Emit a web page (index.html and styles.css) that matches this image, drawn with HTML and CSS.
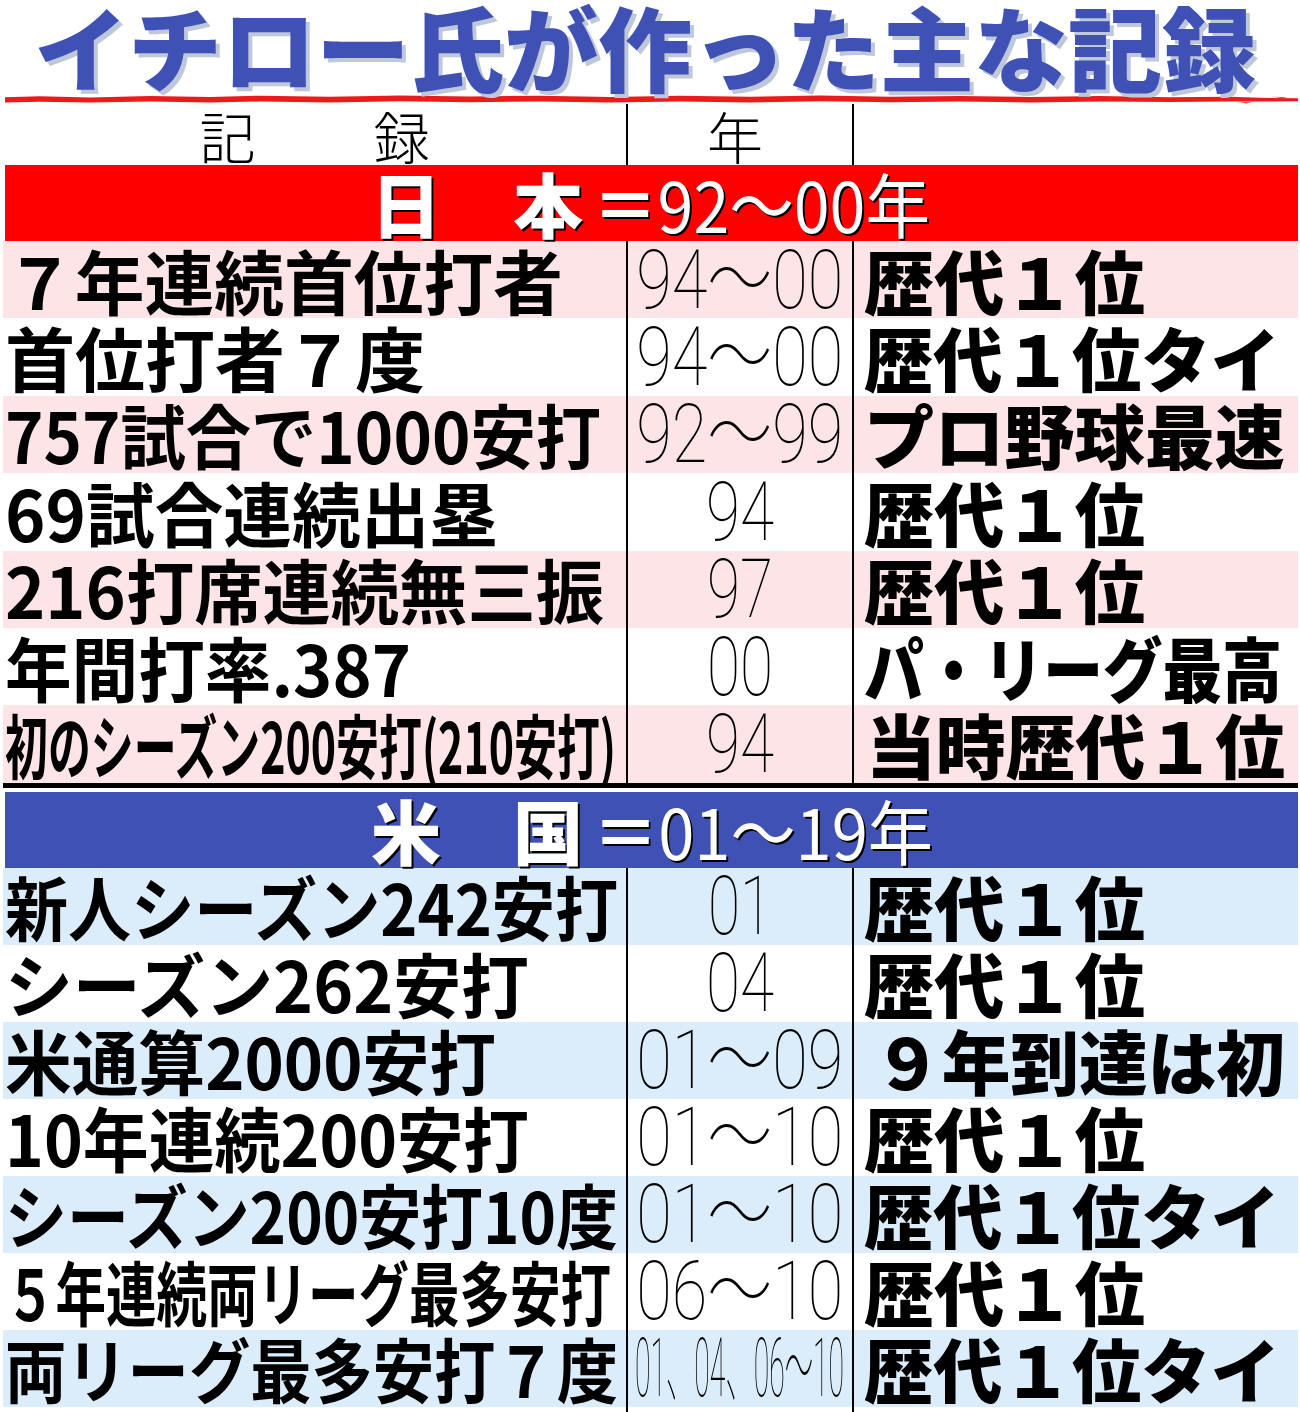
FILE: index.html
```html
<!DOCTYPE html>
<html lang="ja">
<head>
<meta charset="utf-8">
<title>イチロー氏が作った主な記録</title>
<link rel="stylesheet" href="styles.css">
</head>
<body>
<div class="page">
  <h1 class="title"><span class="fit" data-w="1222">イチロー氏が作った主な記録</span></h1>
  <svg class="wave" width="1300" height="9" viewBox="0 0 1300 9" aria-hidden="true">
    <polygon fill="#ec1b1b" points="5,2.2 40,1.2 90,2.4 150,0.9 210,2 260,0.7 330,1.8 400,0.5 470,1.6 540,0.7 610,1.9 680,0.8 750,1.7 820,0.6 890,1.8 960,0.9 1030,2 1100,1 1170,2.2 1230,1.8 1260,2.8 1298,3.2 1298,6.2 1262,6.6 1230,6.4 1170,7.1 1100,6.5 1030,7.4 960,6.4 890,7.3 820,6.3 750,7.4 680,6.5 610,7.5 540,6.4 470,7.3 400,6.2 330,7.4 260,6.5 210,7.6 150,6.6 90,7.6 40,6.7 5,7.4"/>
    <polygon fill="#ec1b1b" points="1240,7 1252,7.5 1246,8.6"/>
    <polygon fill="#ec1b1b" points="1272,1.8 1288,2.2 1282,3"/>
  </svg>
  <div class="row head">
    <div class="c1"><span>記</span><span>録</span></div>
    <div class="c2"><span>年</span></div>
    <div class="c3"></div>
  </div>

  <div class="band red">
    <span class="bk">日</span><span class="bk bk2">本</span><span class="fit num" data-w="337"><b class="eq">＝</b>92〜00年</span>
  </div>

  <div class="sec jp">
    <div class="row"><div class="c1"><span class="fit" data-w="558">７年連続首位打者</span></div><div class="c2"><span class="fit" data-w="207">94〜00</span></div><div class="c3"><span class="fit" data-w="281">歴代１位</span></div></div>
    <div class="row"><div class="c1"><span class="fit" data-w="420">首位打者７度</span></div><div class="c2"><span class="fit" data-w="207">94〜00</span></div><div class="c3"><span class="fit" data-w="416">歴代１位タイ</span></div></div>
    <div class="row"><div class="c1"><span class="fit" data-w="596">757試合で1000安打</span></div><div class="c2"><span class="fit" data-w="207">92〜99</span></div><div class="c3"><span class="fit" data-w="421">プロ野球最速</span></div></div>
    <div class="row"><div class="c1"><span class="fit" data-w="493">69試合連続出塁</span></div><div class="c2"><span class="fit" data-w="68">94</span></div><div class="c3"><span class="fit" data-w="281">歴代１位</span></div></div>
    <div class="row"><div class="c1"><span class="fit" data-w="599">216打席連続無三振</span></div><div class="c2"><span class="fit" data-w="66">97</span></div><div class="c3"><span class="fit" data-w="281">歴代１位</span></div></div>
    <div class="row"><div class="c1"><span class="fit" data-w="406">年間打率.387</span></div><div class="c2"><span class="fit" data-w="66">00</span></div><div class="c3"><span class="fit" data-w="418">パ・リーグ最高</span></div></div>
    <div class="row"><div class="c1"><span class="fit" data-w="611">初のシーズン200安打(210安打)</span></div><div class="c2"><span class="fit" data-w="68">94</span></div><div class="c3 pad2"><span class="fit" data-w="419">当時歴代１位</span></div></div>
  </div>

  <div class="sep"></div>

  <div class="band blue">
    <span class="bk">米</span><span class="bk bk2">国</span><span class="fit num" data-w="340"><b class="eq">＝</b>01〜19年</span>
  </div>

  <div class="sec us">
    <div class="row"><div class="c1"><span class="fit" data-w="613">新人シーズン242安打</span></div><div class="c2"><span class="fit" data-w="64">01</span></div><div class="c3"><span class="fit" data-w="281">歴代１位</span></div></div>
    <div class="row"><div class="c1"><span class="fit" data-w="524">シーズン262安打</span></div><div class="c2"><span class="fit" data-w="68">04</span></div><div class="c3"><span class="fit" data-w="281">歴代１位</span></div></div>
    <div class="row"><div class="c1"><span class="fit" data-w="491">米通算2000安打</span></div><div class="c2"><span class="fit" data-w="207">01〜09</span></div><div class="c3 pad3"><span class="fit" data-w="412">９年到達は初</span></div></div>
    <div class="row"><div class="c1"><span class="fit" data-w="524">10年連続200安打</span></div><div class="c2"><span class="fit" data-w="207">01〜10</span></div><div class="c3"><span class="fit" data-w="281">歴代１位</span></div></div>
    <div class="row"><div class="c1"><span class="fit" data-w="613">シーズン200安打10度</span></div><div class="c2"><span class="fit" data-w="207">01〜10</span></div><div class="c3"><span class="fit" data-w="416">歴代１位タイ</span></div></div>
    <div class="row"><div class="c1"><span class="fit" data-w="606">５年連続両リーグ最多安打</span></div><div class="c2"><span class="fit" data-w="207">06〜10</span></div><div class="c3"><span class="fit" data-w="281">歴代１位</span></div></div>
    <div class="row"><div class="c1"><span class="fit" data-w="613">両リーグ最多安打７度</span></div><div class="c2"><span class="fit" data-w="209">01、04、06〜10</span></div><div class="c3"><span class="fit" data-w="416">歴代１位タイ</span></div></div>
    <div class="row tail"><div class="c1"></div><div class="c2"></div><div class="c3"></div></div>
  </div>
</div>
<script src="script.js"></script>
</body>
</html>
```

FILE: styles.css
```css
html, body {
  margin: 0;
  padding: 0;
  background: #ffffff;
  overflow: hidden;
}

body {
  font-family: "Noto Sans CJK JP", "Noto Sans", sans-serif;
  color: #000;
}

.page {
  width: 1300px;
  height: 1412px;
}

.fit {
  display: inline-block;
  white-space: nowrap;
  transform-origin: left center;
  line-height: 1;
}

.title {
  margin: 0;
  height: 95px;
  padding-right: 10px;
  padding-bottom: 5px;
  box-sizing: border-box;
  display: flex;
  justify-content: center;
  align-items: center;
  font-size: 92px;
  font-weight: 900;
  color: #3f51b5;
  text-shadow: 4px 4px 0 #bfc8d9;
  line-height: 1;
}

.title .fit {
  transform-origin: center center;
}

.wave {
  display: block;
  width: 1300px;
  height: 9px;
}

.row {
  display: flex;
  margin-left: 3px;
  width: 1295px;
  height: 77px;
}

.c1 {
  width: 623px;
  flex: none;
  display: flex;
  align-items: center;
  padding-left: 2px;
  box-sizing: border-box;
  font-size: 70px;
  font-weight: 700;
}

.c2 {
  width: 226px;
  flex: none;
  border-left: 2px solid #000;
  box-sizing: border-box;
  display: flex;
  align-items: center;
  justify-content: center;
  font-family: Roboto, "Noto Sans CJK JP", sans-serif;
  font-size: 82px;
  font-weight: 100;
}

.c2 .fit {
  transform-origin: center center;
}

.c3 {
  flex: 1;
  border-left: 2px solid #000;
  box-sizing: border-box;
  display: flex;
  align-items: center;
  padding-left: 10px;
  font-size: 70px;
  font-weight: 900;
}

.c3.pad2 {
  padding-left: 12px;
}

.c3.pad3 {
  padding-left: 19px;
}

.head {
  height: 61px;
}

.head .c1 {
  justify-content: center;
  gap: 118px;
  padding-left: 0;
  font-size: 56px;
  font-weight: 300;
  line-height: 1;
}

.head .c2 {
  font-family: "Noto Sans CJK JP", sans-serif;
  font-size: 56px;
  font-weight: 300;
  line-height: 1;
  padding-right: 10px;
}

.band {
  margin-left: 5px;
  width: 1293px;
  height: 76px;
  box-sizing: border-box;
  padding-left: 366px;
  display: flex;
  align-items: center;
  color: #fff;
  font-size: 70px;
  line-height: 1;
  text-shadow: 2px 2px 0 #000;
}

.band.red {
  background: #ff0000;
}

.band.blue {
  background: #3f51b5;
}

.band .bk {
  font-weight: 900;
}

.band .bk2 {
  margin-left: 72px;
}

.band .num {
  margin-left: 10px;
  font-weight: 400;
}

.band .eq {
  font-weight: 700;
}

.sec.jp .row {
  height: 77.4px;
}

.sec.jp .row:nth-child(odd) {
  background: #fde4e7;
}

.sec.us .row:nth-child(odd) {
  background: #dbecfb;
}

.sec.us .row.tail {
  height: 5px;
  background: transparent;
}

.sep {
  margin-left: 3px;
  width: 1295px;
  height: 5px;
  background: #000;
  margin-bottom: 4px;
}
```

FILE: script.js
```js
function fitAll() {
  var els = document.querySelectorAll('.fit[data-w]');
  for (var i = 0; i < els.length; i++) {
    var el = els[i];
    el.style.transform = 'none';
    var nat = el.getBoundingClientRect().width;
    var target = parseFloat(el.getAttribute('data-w'));
    if (nat > 0) {
      el.style.transform = 'scaleX(' + (target / nat).toFixed(4) + ')';
    }
  }
}
fitAll();
if (document.fonts && document.fonts.ready) {
  document.fonts.ready.then(fitAll);
}
window.addEventListener('load', fitAll);
```
